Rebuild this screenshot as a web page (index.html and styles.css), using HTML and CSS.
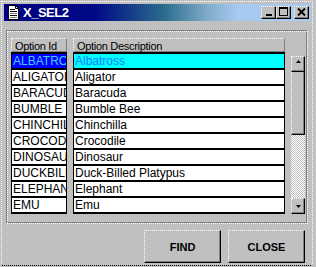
FILE: index.html
```html
<!DOCTYPE html>
<html lang="en">

<head>
    <meta charset="UTF-8">
    <meta name="viewport" content="width=device-width, initial-scale=1.0">
    <title>X_SEL2</title>
    <link rel="stylesheet" href="styles.css">
</head>

<body>

    <div class="window">
        <div class="titlebar">
            <svg class="app-icon" width="11" height="15" viewBox="0 0 11 15">
                <path d="M0.5 0.5h7l3 3v11h-10z" fill="#fff" stroke="#000"/>
                <path d="M7.5 0.5v3h3" fill="none" stroke="#000"/>
                <rect x="2" y="4" width="5" height="1" fill="#000"/>
                <rect x="2" y="6" width="7" height="1" fill="#000"/>
                <rect x="2" y="8" width="7" height="1" fill="#808080"/>
                <rect x="2" y="10" width="7" height="1" fill="#000"/>
                <rect x="2" y="12" width="7" height="1" fill="#808080"/>
            </svg>
            <span class="title">X_SEL2</span>
            <div class="caption-buttons">
                <span class="cap-btn">
                    <svg width="13" height="11" viewBox="0 0 13 11"><rect x="4" y="7" width="6" height="2" fill="#000"/></svg>
                </span>
                <span class="cap-btn">
                    <svg width="13" height="11" viewBox="0 0 13 11">
                        <rect x="2" y="0" width="9" height="2" fill="#000"/>
                        <rect x="2" y="0" width="1" height="9" fill="#000"/>
                        <rect x="10" y="0" width="1" height="9" fill="#000"/>
                        <rect x="2" y="8" width="9" height="1" fill="#000"/>
                    </svg>
                </span>
                <span class="cap-btn close-btn">
                    <svg width="13" height="11" viewBox="0 0 13 11"><path d="M3 1.5l7 7M10 1.5l-7 7" stroke="#000" stroke-width="1.8"/></svg>
                </span>
            </div>
        </div>

        <!-- lista de valores -->
        <div class="panel">
            <div class="panel-inner">
                <div class="lov">
                    <div class="col-head">Option Id</div>
                    <div class="col-head">Option Description</div>

                    <div class="col ids">
                        <div class="cell selected">ALBATROSS</div>
                        <div class="cell">ALIGATOR</div>
                        <div class="cell">BARACUDA</div>
                        <div class="cell">BUMBLE</div>
                        <div class="cell">CHINCHILLA</div>
                        <div class="cell">CROCODILE</div>
                        <div class="cell">DINOSAUR</div>
                        <div class="cell">DUCKBILL</div>
                        <div class="cell">ELEPHANT</div>
                        <div class="cell">EMU</div>
                    </div>

                    <div class="col descs">
                        <div class="cell selected">Albatross</div>
                        <div class="cell">Aligator</div>
                        <div class="cell">Baracuda</div>
                        <div class="cell">Bumble Bee</div>
                        <div class="cell">Chinchilla</div>
                        <div class="cell">Crocodile</div>
                        <div class="cell">Dinosaur</div>
                        <div class="cell">Duck-Billed Platypus</div>
                        <div class="cell">Elephant</div>
                        <div class="cell">Emu</div>
                    </div>

                    <div class="scrollbar">
                        <span class="sb-btn sb-up">
                            <svg width="5" height="3" viewBox="0 0 5 3"><path d="M2.5 0L5 3H0z" fill="#000"/></svg>
                        </span>
                        <span class="sb-thumb"></span>
                        <span class="sb-track"></span>
                        <span class="sb-btn">
                            <svg width="5" height="3" viewBox="0 0 5 3"><path d="M0 0h5L2.5 3z" fill="#000"/></svg>
                        </span>
                    </div>
                </div>
            </div>
        </div>

        <div class="actions">
            <button class="btn">FIND</button>
            <button class="btn">CLOSE</button>
        </div>
    </div>

</body>

</html>
```

FILE: styles.css
```css
body {
    margin: 0;
    padding: 0;
    background-color: #c0c0c0;
    font-family: 'Liberation Sans', Arial, sans-serif;
}

.window {
    width: 312px;
    height: 265px;
    box-sizing: border-box;
    margin: 1px 0 0 1px;
    border: 1px dotted #fff;
    border-bottom-color: #000;
    display: flex;
    flex-direction: column;
}

.titlebar {
    height: 17px;
    margin: 2px 1px 0 2px;
    display: flex;
    align-items: center;
    background: linear-gradient(to right, #000080 0%, #000a86 30%, #2a6c8c 52%, #7eaac8 66%, #a6caf0 76%, #a6caf0 100%);
}

.app-icon {
    margin-left: 4px;
    flex: none;
}

.title {
    margin-left: 4px;
    color: #fff;
    font-size: 13px;
    font-weight: bold;
    letter-spacing: -0.5px;
}

.caption-buttons {
    margin-left: auto;
    margin-right: 2px;
    display: flex;
}

.cap-btn {
    width: 15px;
    height: 13px;
    box-sizing: border-box;
    background-color: #c0c0c0;
    border-style: dotted solid solid dotted;
    border-width: 1px;
    border-color: #fff #000 #000 #fff;
    box-shadow: inset -1px -1px #808080;
    display: flex;
}

.close-btn {
    margin-left: 3px;
}

.panel {
    height: 194px;
    box-sizing: border-box;
    margin: 9px 4px 0 4px;
    border-width: 1px;
    border-style: solid dotted dotted solid;
    border-color: #808080 #fff #fff #808080;
}

.panel-inner {
    height: 100%;
    box-sizing: border-box;
    padding: 6px 0 0 3px;
    border-width: 1px;
    border-style: dotted solid solid dotted;
    border-color: #fff #808080 #808080 #fff;
}

.lov {
    display: grid;
    grid-template-columns: 56px 212px 14px;
    grid-template-rows: 14px auto;
    column-gap: 6px;
    align-items: start;
}

.col-head {
    height: 14px;
    box-sizing: border-box;
    padding-left: 3px;
    border-width: 1px;
    border-style: dotted solid solid dotted;
    border-color: #fff #808080 #808080 #fff;
    font-size: 11px;
    line-height: 14px;
    letter-spacing: -0.3px;
    color: #000;
    white-space: nowrap;
    overflow: visible;
}

.col {
    grid-row: 2;
    border-bottom: 2px solid #000;
}

.ids {
    grid-column: 1;
}

.descs {
    grid-column: 2;
}

.cell {
    height: 14px;
    padding-left: 1px;
    border-top: 2px solid #000;
    border-left: 1px solid #000;
    border-right: 1px solid #000;
    background-color: #fff;
    color: #000;
    font-size: 12px;
    line-height: 14px;
    white-space: nowrap;
    overflow: hidden;
}

.ids .cell.selected {
    background-color: #0000ff;
    color: #40d0ff;
}

.descs .cell.selected {
    background-color: #00ffff;
    color: #1a7cff;
}

.scrollbar {
    grid-column: 3;
    grid-row: 2;
    margin-top: 4px;
    height: 158px;
    display: flex;
    flex-direction: column;
}

.sb-btn {
    height: 16px;
    box-sizing: border-box;
    background-color: #c0c0c0;
    border-width: 1px;
    border-style: dotted solid solid dotted;
    border-color: #fff #000 #000 #fff;
    box-shadow: inset -1px -1px #808080;
    display: flex;
    align-items: center;
    justify-content: center;
}

.sb-up {
    align-items: flex-start;
    padding-top: 3px;
}

.sb-thumb {
    height: 63px;
    box-sizing: border-box;
    background-color: #c0c0c0;
    border-left: 1px dotted #fff;
    border-right: 1px solid #000;
    border-bottom: 1px solid #000;
    box-shadow: inset -1px -1px #808080;
}

.sb-track {
    flex: 1;
    background: repeating-conic-gradient(#fff 0 25%, #c0c0c0 0 50%) 0 0 / 2px 2px;
}

.actions {
    margin-top: 6px;
    padding-right: 7px;
    display: flex;
    justify-content: flex-end;
    gap: 7px;
}

.btn {
    width: 77px;
    height: 33px;
    padding: 0;
    background-color: #c0c0c0;
    border-width: 1px;
    border-style: dotted solid solid dotted;
    border-color: #fff #000 #000 #fff;
    box-shadow: inset -1px -1px #808080;
    font-family: 'Liberation Sans', Arial, sans-serif;
    font-size: 11px;
    font-weight: bold;
    color: #000;
}
```
